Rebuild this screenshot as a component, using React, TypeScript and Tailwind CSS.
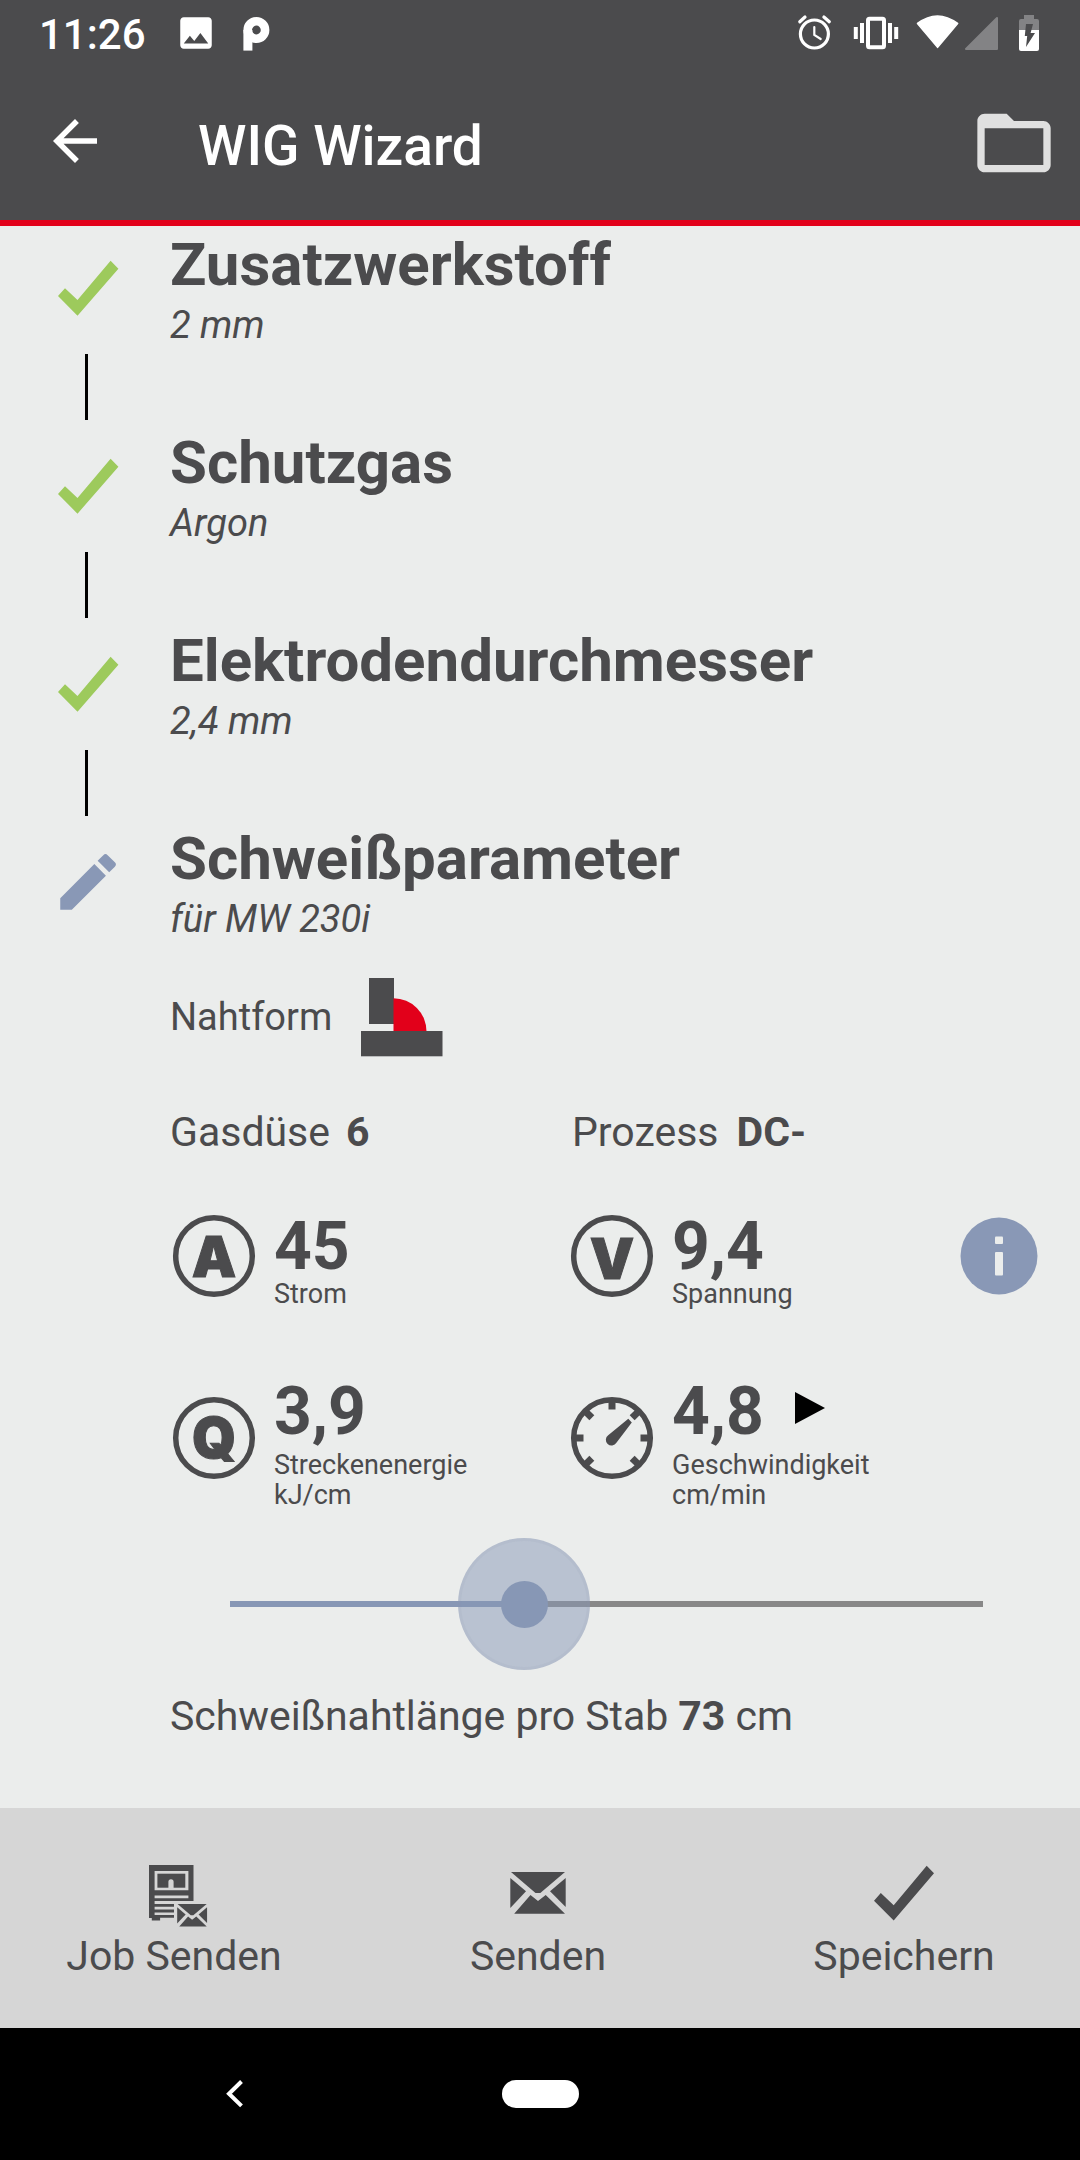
import type { ReactNode } from 'react';
import { MdArrowBack, MdEdit, MdFolderOpen, MdImage } from 'react-icons/md';

type StepProps = {
  title: string;
  value: string;
  active?: boolean;
};

const STEPS: StepProps[] = [
  { title: 'Zusatzwerkstoff', value: '2 mm' },
  { title: 'Schutzgas', value: 'Argon' },
  { title: 'Elektrodendurchmesser', value: '2,4 mm' },
];

function StatusBar() {
  return (
    <div className="flex h-[66px] items-start text-white">
      <span className="mt-[10px] ml-[39px] w-[136px] text-[42px] leading-[50px] font-medium">11:26</span>
      <MdImage className="mt-[12px] h-[42px] w-[42px]" />
      <svg className="mt-[14px] ml-[22px]" width="36" height="40" viewBox="239 14 36 40">
        <circle cx="256.4" cy="30" r="8.7" fill="none" stroke="currentColor" strokeWidth="8.6" />
        <rect x="243.4" y="30" width="9" height="20.6" fill="currentColor" />
      </svg>

      <svg className="ml-auto" width="285" height="66" viewBox="795 0 285 66" fill="none" stroke="currentColor">
        {/* alarm */}
        <circle cx="814.4" cy="34" r="14" strokeWidth="3.2" />
        <path d="M814.3 27v8l6.4 4" strokeWidth="2.2" strokeLinecap="round" />
        <path d="M799.8 21.8l5.2-4.8M823.9 17l5.4 4.8" strokeWidth="3.2" strokeLinecap="round" />
        {/* vibrate */}
        <rect x="868" y="18.7" width="16" height="28.6" rx="1.5" strokeWidth="4" />
        <path d="M862 23v20M855.8 27v12M890 23v20M896.2 27v12" strokeWidth="4" />
        {/* wifi */}
        <path
          d="M917.5 23.5Q937.4 8.5 957.6 23.5L937.6 47.3z"
          fill="currentColor"
          strokeWidth="1.6"
          strokeLinejoin="round"
        />
        {/* mobile signal, no bars */}
        <path d="M966 49L997 18v31z" className="fill-[#838385] stroke-[#838385]" strokeWidth="2" strokeLinejoin="round" />
        {/* battery */}
        <path d="M1019 30v-9q0-2 2-2h3v-4h10v4h3q2 0 2 2v9z" className="fill-[#838385]" stroke="none" />
        <path d="M1019 30h20v19q0 2-2 2h-16q-2 0-2-2z" fill="currentColor" stroke="none" />
        <path d="M1026 24h7l-2.4 9h4.4l-9 14 1.2-11h-2.4z" className="fill-[#4b4b4d]" stroke="none" />
      </svg>
    </div>
  );
}

function AppBar() {
  return (
    <div className="flex h-[154px] items-start text-white">
      <MdArrowBack className="mt-[42px] ml-[42px] h-[66px] w-[66px]" />
      <h1 className="mt-[48px] ml-[90px] text-[55px] leading-[64px] font-medium">WIG Wizard</h1>
      <MdFolderOpen className="mt-[33px] mr-[22px] ml-auto h-[88px] w-[88px] text-[#e0e0e0]" />
    </div>
  );
}

function Step({ title, value, active, children }: StepProps & { children?: ReactNode }) {
  return (
    <section className={active ? 'flex' : 'flex h-[198px]'}>
      <div className="w-[170px] shrink-0 pt-[26px]">
        {active ? (
          <MdEdit className="-mt-px ml-[51px] h-[74px] w-[74px] text-[#8998b6]" />
        ) : (
          <>
            <svg className="ml-[52px]" width="72" height="72" viewBox="0 0 72 72">
              <polygon points="6,44 13,36.3 25.5,48 58.6,8.7 66.4,16.7 25.5,63.7" className="fill-[#9dca5c]" />
            </svg>
            <div className="mt-[30px] ml-[85px] h-[66px] w-[3px] bg-black" />
          </>
        )}
      </div>
      <div className="flex-1 pt-[7px]">
        <h2 className="text-[60px] leading-[64px] font-bold">{title}</h2>
        <p className="mt-[5px] text-[38px] leading-[46px] italic">{value}</p>
        {children}
      </div>
    </section>
  );
}

function CircleIcon({ children }: { children: ReactNode }) {
  return (
    <svg className="shrink-0 font-['Inter','Roboto',sans-serif]" width="84" height="84" viewBox="-42 -42 84 84">
      <circle r="38.3" fill="none" stroke="currentColor" strokeWidth="5.5" />
      {children}
    </svg>
  );
}

function LetterIcon({ letter, y }: { letter: string; y: number }) {
  return (
    <CircleIcon>
      <text
        y={y}
        textAnchor="middle"
        fontSize="56"
        fontWeight="900"
        fill="currentColor"
        stroke="currentColor"
        strokeWidth="1"
      >
        {letter}
      </text>
    </CircleIcon>
  );
}

function GaugeIcon() {
  return (
    <CircleIcon>
      <g stroke="currentColor" strokeWidth="7">
        {[-135, -90, -45, 0, 45, 90, 135].map((angle) => (
          <line key={angle} y1="-38" y2="-28.5" transform={`rotate(${angle})`} />
        ))}
      </g>
      <path d="M16.3-19.2L19.8-15.4 4.4 4.8A5.7 5.7 0 1 1-3.8-2.8z" fill="currentColor" />
    </CircleIcon>
  );
}

function Metric({
  icon,
  value,
  label,
  unit,
  extra,
}: {
  icon: ReactNode;
  value: string;
  label: string;
  unit?: string;
  extra?: ReactNode;
}) {
  return (
    <div className="flex">
      <div className={unit ? 'mt-[17px]' : ''}>{icon}</div>
      <div className="ml-[18px]">
        <div className="flex">
          <span className="text-[66px] leading-[65px] font-bold">{value}</span>
          {extra}
        </div>
        <div className={unit ? 'mt-[6px] text-[27px] leading-[30px]' : 'text-[27px] leading-[30px]'}>
          {label}
          {unit && <div>{unit}</div>}
        </div>
      </div>
    </div>
  );
}

function WeldParameters() {
  return (
    <>
      <div className="mt-[36px] flex h-[79px] items-center">
        <span className="w-[190px] pb-[2px] text-[38px] leading-[46px]">Nahtform</span>
        <svg width="84" height="79" viewBox="360 978 84 79">
          <rect x="369" y="978" width="25" height="46" fill="currentColor" />
          <path d="M393.5 998.3A33 33 0 0 1 426.5 1031.3H393.5z" className="fill-[#e2001a]" />
          <rect x="361" y="1031" width="81.5" height="25.3" fill="currentColor" />
        </svg>
      </div>

      <div className="mt-[51px] grid grid-cols-[402px_1fr] text-[41px] leading-[48px]">
        <p>
          Gasdüse<b className="ml-[16px]">6</b>
        </p>
        <p>
          Prozess<b className="ml-[18px]">DC-</b>
        </p>
      </div>

      <div className="mt-[58px] grid grid-cols-[398px_388px_1fr]">
        <div className="ml-[2px]">
          <Metric icon={<LetterIcon letter="A" y={21} />} value="45" label="Strom" />
        </div>
        <div className="ml-[2px]">
          <Metric icon={<LetterIcon letter="V" y={23} />} value="9,4" label="Spannung" />
        </div>
        <svg className="mt-[2px] ml-[3px]" width="80" height="80" viewBox="-40 -40 80 80">
          <circle r="38.5" className="fill-[#8998b6]" />
          <rect x="-4" y="-19.5" width="8" height="7.5" rx="1" className="fill-[#ebedec]" />
          <rect x="-4" y="-4" width="8" height="23.5" rx="1" className="fill-[#ebedec]" />
        </svg>
      </div>

      <div className="mt-[70px] grid grid-cols-[398px_1fr]">
        <div className="ml-[2px]">
          <Metric icon={<LetterIcon letter="Q" y={20} />} value="3,9" label="Streckenenergie" unit="kJ/cm" />
        </div>
        <div className="ml-[2px]">
          <Metric
            icon={<GaugeIcon />}
            value="4,8"
            label="Geschwindigkeit"
            unit="cm/min"
            extra={
              <svg className="mt-[13px] ml-[31px]" width="30" height="32" viewBox="0 0 30 32">
                <polygon points="0,0 30,16 0,32" fill="black" />
              </svg>
            }
          />
        </div>
      </div>

      <div className="relative mt-[28px] ml-[60px] flex h-[132px] w-[753px] items-center">
        <div className="h-[6px] w-[294px] bg-[#8797b5]" />
        <div className="h-[6px] flex-1 bg-[#888888]" />
        <div className="absolute left-[228px] flex h-[132px] w-[132px] items-center justify-center rounded-full border-3 border-[#8797b5]/10 bg-[#8797b5]/50">
          <div className="h-[47px] w-[47px] rounded-full bg-[#8797b5]" />
        </div>
      </div>

      <p className="mt-[22px] text-[41px] leading-[48px] tracking-[-0.04px]">
        Schweißnahtlänge pro Stab <b>73</b> cm
      </p>
    </>
  );
}

function Envelope() {
  return (
    <g fill="currentColor">
      <polygon points="1,0 55,0 30.3,21 25.5,21" />
      <polygon points="0.3,6 16,19.3 0.3,36" />
      <polygon points="55.7,6 40,19.3 55.7,35" />
      <polygon points="4.2,41.8 20.5,23 28,29 35.7,23 55,41.8" />
    </g>
  );
}

function ActionBar() {
  return (
    <div className="flex h-[220px] text-[41px] leading-[48px]">
      <button className="flex w-[348px] flex-col items-center pt-[52px]">
        <svg className="ml-[8px]" width="64" height="72" viewBox="146 1860 64 72">
          <g fill="currentColor">
            <path
              fillRule="evenodd"
              d="M149 1865h44.5v36H154.6v17H149zM154.6 1871v19.3h33.8V1871zM154.6 1895.5v2.8h33.8v-2.8z"
            />
            <rect x="157.4" y="1873.7" width="27.9" height="14" />
            <path d="M149 1904h25v2.8h-25zM149 1909.6h25v2.8h-25zM149 1915h25v2.8h-25zM151.8 1917h8.3v3.5h-8.3z" />
          </g>
          <path d="M168.4 1888v-6.2a2.6 2.6 0 0 1 5.2 0v6.2z" className="fill-[#d6d6d6]" />
          <g transform="translate(177 1904) scale(.54)">
            <Envelope />
          </g>
        </svg>
        <span>Job Senden</span>
      </button>
      <button className="flex w-[380px] flex-col items-center pt-[52px]">
        <svg width="72" height="72" viewBox="-8 -12 72 72">
          <Envelope />
        </svg>
        <span>Senden</span>
      </button>
      <button className="flex w-[352px] flex-col items-center pt-[52px]">
        <svg width="72" height="72" viewBox="869 1860 72 72">
          <polygon
            points="875,1900.7 881.8,1893 894.7,1905.3 927.7,1865.7 935,1873.3 894.7,1920.5"
            fill="currentColor"
          />
        </svg>
        <span>Speichern</span>
      </button>
    </div>
  );
}

function NavigationBar() {
  return (
    <div className="flex h-[132px] items-center bg-black">
      <svg className="ml-[220px]" width="30" height="34" viewBox="220 2078 30 34">
        <path d="M241.5 2082.5L229 2094.7l12.5 12.2" fill="none" stroke="white" strokeWidth="4" />
      </svg>
      <div className="ml-[252px] h-[28px] w-[77px] rounded-full bg-white" />
    </div>
  );
}

export default function App() {
  return (
    <div className="flex h-[2160px] w-[1080px] flex-col overflow-hidden bg-[#ebedec] font-['Roboto',sans-serif] text-[#4b4b4d]">
      <header className="border-b-[6px] border-[#e2001a] bg-[#4b4b4d]">
        <StatusBar />
        <AppBar />
      </header>

      <main className="flex-1">
        {STEPS.map((step) => (
          <Step key={step.title} {...step} />
        ))}
        <Step title="Schweißparameter" value="für MW 230i" active>
          <WeldParameters />
        </Step>
      </main>

      <footer className="bg-[#d6d6d6]">
        <ActionBar />
        <NavigationBar />
      </footer>
    </div>
  );
}
